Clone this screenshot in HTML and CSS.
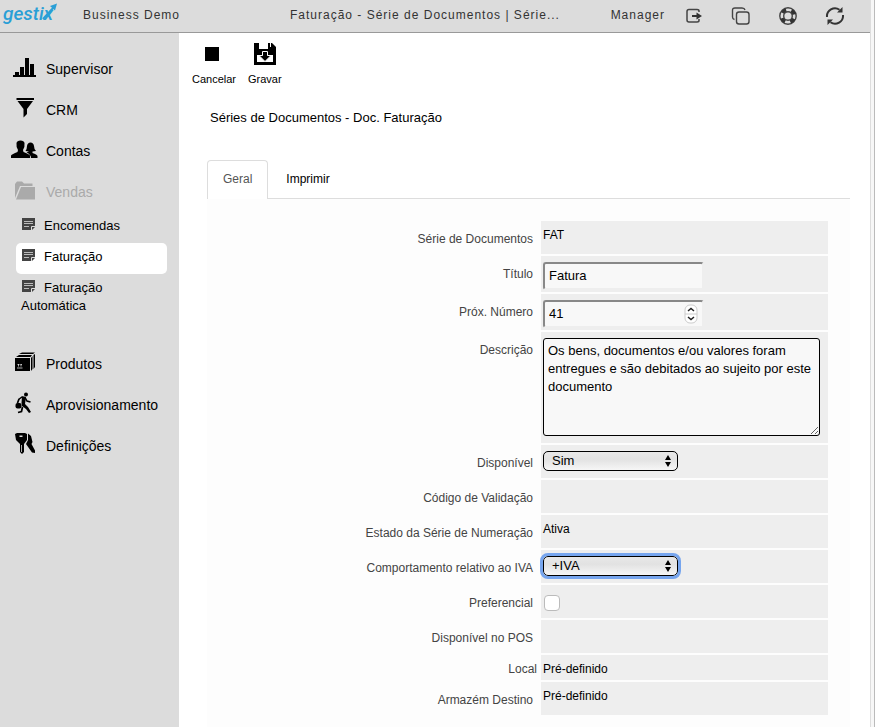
FILE: index.html
```html
<!DOCTYPE html>
<html lang="pt">
<head>
<meta charset="utf-8">
<title>Faturação - Série de Documentos</title>
<link rel="stylesheet" href="styles.css">
</head>
<body>
<div class="app">
  <header class="topbar">
    <a class="logo" href="#"><span class="logo-text">gestix</span>
      <svg class="logo-arrow" width="18" height="20" viewBox="0 0 18 20"><path d="M3 17L14 5" stroke="#2a9fd6" stroke-width="2" fill="none"/><path d="M10 4L17 1.500 15 8.500Z" fill="#2a9fd6"/></svg>
    </a>
    <span class="company">Business Demo</span>
    <span class="crumb">Faturação - Série de Documentos | Série...</span>
    <span class="user">Manager</span>
    <nav class="actions">
      <button type="button" aria-label="Sair"><svg width="20" height="20" viewBox="0 0 20 20"><path d="M15 6V5Q15 3.500 13 3.500H5Q3 3.500 3 5.500V14Q3 16 5 16H13Q15 16 15 14.500V13" fill="none" stroke="#444" stroke-width="1.500"/><path d="M8 9H12.500V6.500L18 10 12.500 13.500V11H8Z" fill="#333"/></svg></button>
      <button type="button" aria-label="Duplicar"><svg width="20" height="20" viewBox="0 0 20 20"><rect x="5.500" y="6" width="12.500" height="12" rx="2.500" fill="none" stroke="#444" stroke-width="1.400"/><path d="M3.500 13.500Q1.500 13 1.500 11V4.500Q1.500 2 4 2H11Q13.500 2 14 4" fill="none" stroke="#444" stroke-width="1.400"/></svg></button>
      <button type="button" aria-label="Ajuda"><svg width="20" height="20" viewBox="0 0 20 20"><circle cx="10" cy="10" r="8.200" fill="none" stroke="#444" stroke-width="1.400"/><circle cx="10" cy="10" r="6.200" fill="none" stroke="#333" stroke-width="4" stroke-dasharray="4.400 5.340" stroke-dashoffset="-2.700"/><circle cx="10" cy="10" r="4.300" fill="none" stroke="#444" stroke-width="1.400"/></svg></button>
      <button type="button" aria-label="Atualizar"><svg width="20" height="20" viewBox="0 0 20 20"><path d="M2 11A8 8 0 0 1 14.500 3.700M18 9A8 8 0 0 1 5.500 16.300" fill="none" stroke="#333" stroke-width="2"/><path d="M12 6.500L17.500 1V6.500ZM8 13.500L2.500 19V13.500Z" fill="#333"/></svg></button>
    </nav>
  </header>
  <div class="layout">
    <nav class="sidebar">
      <a class="item" href="#"><svg class="icon" width="28" height="24" viewBox="0 0 28 24"><path d="M3 20H26V22H3ZM5 17H9V21H5ZM10 12H14V21H10ZM15 3H19V21H15ZM20 9H24V21H20Z"/></svg>Supervisor</a>
      <a class="item" href="#"><svg class="icon" width="28" height="24" viewBox="0 0 28 24"><path d="M6.500 2H24V4H6.500ZM7.500 5H23L17 13V18L13.500 21.500V13Z"/></svg>CRM</a>
      <a class="item" href="#"><svg class="icon" width="28" height="24" viewBox="0 0 28 24"><path d="M1 21V18.500Q2 17 7.500 15L8 13Q6 10 6.500 6Q7 3.500 10.500 3.500T14.500 6Q15 10 13 13L13.500 15Q19 17 20 18.500V21Z"/><path d="M21 21Q21 17.500 16.500 15.500L19 14.500Q17 14 15.500 14Q17 12 17 9Q17.500 5.500 20.500 5.500T24 9Q24 12 26 14L22.500 14.500V16Q27 17.500 27.500 19V21Z"/></svg>Contas</a>
      <a class="item muted" href="#"><svg class="icon" width="28" height="24" viewBox="0 0 28 24"><path d="M5 20V6L7 3.500H12L14 5.500H22.500V8H10L5 20Z"/><path d="M11 9H25V21.500H6Z"/></svg>Vendas</a>
      <div class="submenu">
        <a class="sub" href="#"><svg width="13" height="12" viewBox="0 0 13 12"><path d="M0 0H13V9L10 12H0Z" fill="#444"/><path d="M2 3.500H11M2 5.500H11M2 8.500H7" stroke="#bbb"/><path d="M9.500 12V8.500H13" fill="none" stroke="#ddd"/></svg>Encomendas</a>
        <a class="sub active" href="#"><svg width="13" height="12" viewBox="0 0 13 12"><path d="M0 0H13V9L10 12H0Z" fill="#444"/><path d="M2 3.500H11M2 5.500H11M2 8.500H7" stroke="#bbb"/><path d="M9.500 12V8.500H13" fill="none" stroke="#ddd"/></svg>Faturação</a>
        <a class="sub" href="#"><svg width="13" height="12" viewBox="0 0 13 12"><path d="M0 0H13V9L10 12H0Z" fill="#444"/><path d="M2 3.500H11M2 5.500H11M2 8.500H7" stroke="#bbb"/><path d="M9.500 12V8.500H13" fill="none" stroke="#ddd"/></svg>Faturação Automática</a>
      </div>
      <a class="item" href="#"><svg class="icon" width="28" height="24" viewBox="0 0 28 24"><path d="M5 8H20V21H5ZM6 7L9 5H22L20.500 7ZM9 4L12 2.500H25L23 4ZM21 8L22.500 6V19L21 21ZM23.500 5L25 4V17L23.500 19Z"/><path d="M7 18H12.500M8.500 16.500V14M11 16.500V14M7.500 14.500H9.500M10.500 14.500H12" stroke="#ddd" fill="none" stroke-width=".8"/></svg>Produtos</a>
      <a class="item" href="#"><svg class="icon" width="28" height="24" viewBox="0 0 28 24"><circle cx="16" cy="3.500" r="2"/><path d="M8.500 8.500L12 6L15 6.500L17 10L20.500 11" fill="none" stroke="#000" stroke-width="1.500"/><path d="M12 5.500L16 6.500L15 13L18 16L21 21L19 22L16 18L12 15L11.500 12Z"/><path d="M9 8L7.500 12M12.500 16L11.500 20.500L8 21.500" fill="none" stroke="#000" stroke-width="1.700"/><rect x="5.500" y="12" width="6" height="5.500" rx="2"/></svg>Aprovisionamento</a>
      <a class="item" href="#"><svg class="icon" width="28" height="24" viewBox="0 0 28 24"><path fill-rule="evenodd" d="M5 2L7 1H15L17 2V8L14 12V20L12 22L10 20V12L6 8ZM9.500 3.500H12.500V5H9.500Z"/><path d="M18 1.500L21 4L22.500 10L21.500 12L25 18.500V21L22 20.500L16 12L18 8Z"/><path d="M11.500 13V20" stroke="#aaa" stroke-width="1"/></svg>Definições</a>
    </nav>
    <main class="content">
      <div class="toolbar">
        <button type="button" class="tool"><svg width="24" height="24" viewBox="0 0 24 24"><rect x="3" y="5" width="14" height="14"/></svg>Cancelar</button>
        <button type="button" class="tool"><svg width="24" height="24" viewBox="0 0 24 24"><path d="M1 1H6V7H15V1H17V5H18V1H19L23 5V23H1Z"/><path d="M4 13H20V20H4Z" fill="#fff"/><path d="M9.500 9.500H14.500V13.500H18L12 19.500L6 13.500H9.500Z" stroke="#fff"/></svg>Gravar</button>
      </div>
      <h1 class="title">Séries de Documentos - Doc. Faturação</h1>
      <div class="tabs">
        <button type="button" class="tab selected">Geral</button>
        <button type="button" class="tab">Imprimir</button>
      </div>
      <form class="panel">
        <div class="row"><span class="label">Série de Documentos</span><div class="value">FAT</div></div>
        <div class="row tall"><label class="label" for="titulo">Título</label><div class="value"><input class="box" id="titulo" type="text" value="Fatura"></div></div>
        <div class="row tall"><label class="label" for="numero">Próx. Número</label><div class="value"><span class="field"><input class="box" id="numero" type="number" value="41"><svg class="spinner" width="14" height="20" viewBox="0 0 14 20"><rect x="1" y="1" width="12" height="18" rx="5" fill="#fff" stroke="#ccc"/><path d="M1 10H13" stroke="#ccc"/><path d="M4 7L7 4.500 10 7M4 13L7 15.500 10 13" fill="none" stroke="#222" stroke-width="1.500"/></svg></span></div></div>
        <div class="row area"><label class="label" for="descricao">Descrição</label><div class="value"><textarea class="text" id="descricao">Os bens, documentos e/ou valores foram entregues e são debitados ao sujeito por este documento</textarea></div></div>
        <div class="row"><label class="label" for="disponivel">Disponível</label><div class="value"><span class="field"><select class="select" id="disponivel"><option>Sim</option><option>Não</option></select><svg class="arrows" width="8" height="12" viewBox="0 0 8 12"><path d="M4 0L7 5H1ZM4 12L7 7H1Z"/></svg></span></div></div>
        <div class="row"><span class="label">Código de Validação</span><div class="value"></div></div>
        <div class="row"><span class="label">Estado da Série de Numeração</span><div class="value">Ativa</div></div>
        <div class="row"><label class="label" for="iva">Comportamento relativo ao IVA</label><div class="value"><span class="field"><select class="select focused" id="iva"><option>+IVA</option></select><svg class="arrows" width="8" height="12" viewBox="0 0 8 12"><path d="M4 0L7 5H1ZM4 12L7 7H1Z"/></svg></span></div></div>
        <div class="row"><label class="label" for="pref">Preferencial</label><div class="value"><input class="check" id="pref" type="checkbox"></div></div>
        <div class="row"><span class="label">Disponível no POS</span><div class="value"></div></div>
        <div class="row short"><span class="label">Local</span><div class="value">Pré-definido</div></div>
        <div class="row"><span class="label">Armazém Destino</span><div class="value">Pré-definido</div></div>
      </form>
    </main>
  </div>
</div>
<div class="gutter"></div>
</body>
</html>
```
FILE: styles.css
```css
* { box-sizing: border-box; }
body {
  margin: 0;
  min-height: 100vh;
  display: flex;
  background: #fff;
  color: #000;
  font: 12px/18px "Liberation Sans", Arial, sans-serif;
}
button, input, select, textarea { font: inherit; color: inherit; }
button { background: none; border: 0; padding: 0; cursor: pointer; }
a { color: inherit; text-decoration: none; }
svg { flex: none; }
.app { flex: 1; min-width: 0; display: flex; flex-direction: column; }
.gutter { width: 5px; background: #f7f7f7; border-left: 1px solid #ddd; border-right: 1px solid #bbb; }

.topbar {
  display: flex;
  align-items: center;
  height: 33px;
  padding-right: 25px;
  background: #dcdcdc;
  border-bottom: 1px solid #999;
  color: #333;
  letter-spacing: 1px;
  white-space: nowrap;
}
.company, .crumb, .user { padding-bottom: 2px; }
.logo { position: relative; width: 83px; padding: 0 0 4px 3px; color: #2a9fd6; }
.logo-text { font: italic 500 19px/28px Roboto, sans-serif; letter-spacing: 0; }
.logo-arrow { position: absolute; left: 40px; top: 2px; }
.company { width: 207px; }
.crumb { flex: 1; }
.actions { display: flex; gap: 27px; margin-left: 19px; }
.actions button { width: 20px; height: 20px; }

.layout { flex: 1; display: flex; }
.sidebar { width: 179px; background: #dcdcdc; padding: 15px 12px 0 10px; }
.item { display: flex; align-items: center; gap: 8px; height: 41px; font-size: 14px; }
.icon { margin-bottom: 4px; fill: currentColor; }
.muted { color: #aaa; }
.submenu { padding: 0 0 20px 6px; }
.sub { display: block; padding: 5px 5px 8px; line-height: 18px; font-size: 13px; border-radius: 5px; }
.sub svg { margin: 0 9px 0 1px; }
.active { background: #fff; }

.content { flex: 1; min-width: 0; padding: 9px 20px 12px 13px; }
.toolbar { display: flex; gap: 12px; }
.tool { display: flex; flex-direction: column; align-items: center; gap: 4px; font-size: 11px; }
.title { margin: 21px 0 33px 18px; font-size: 13px; font-weight: 400; line-height: 18px; }
.tabs { display: flex; margin-left: 15px; border-bottom: 1px solid #ddd; }
.tab { height: 38px; padding: 0 18px; }
.selected {
  height: 39px;
  margin-bottom: -1px;
  padding: 0 15px 2px;
  color: #555;
  background: #fff;
  border: 1px solid #ddd;
  border-bottom: 0;
  border-radius: 4px 4px 0 0;
}
.panel { display: grid; gap: 2px; margin-left: 15px; padding: 22px 22px 12px 0; background: #fdfdfd; }
.row { display: grid; grid-template-columns: 1fr 287px; min-height: 33px; }
.tall { min-height: 36px; }
.area { min-height: 111px; }
.short { min-height: 25px; }
.label { padding: 9px 8px 0 0; text-align: right; color: #444; }
.short .label { padding: 5px 4px 0 0; }
.value { padding: 5px 2px 0; background: #eee; }
.tall .value, .area .value, .value:has(.select) { padding-top: 6px; }
.field { position: relative; display: block; width: fit-content; }
.box {
  display: block;
  width: 161px;
  height: 28px;
  padding: 0 4px 2px;
  font-size: 13px;
  background: #f8f8f8;
  border: 2px solid;
  border-color: #888 #eee #eee #888;
  border-radius: 3px;
  appearance: textfield;
}
.box::-webkit-inner-spin-button { appearance: none; margin: 0; }
.spinner { position: absolute; right: 6px; top: 4px; }
.text {
  display: block;
  width: 277px;
  height: 98px;
  padding: 3px 4px;
  font-size: 13px;
  line-height: 18px;
  background: #f8f8f8;
  border: 1px solid #000;
  border-radius: 3px;
}
.select {
  display: block;
  width: 135px;
  height: 20px;
  padding: 0 8px;
  font-size: 13px;
  line-height: 18px;
  appearance: none;
  background: linear-gradient(#e8e8e8, #e2e2e2 40%, #f6f6f6);
  border: 1px solid #000;
  border-radius: 5px;
}
.focused { outline: 3px solid #76a5ee; }
.arrows { position: absolute; right: 6px; top: 4px; }
.check {
  display: block;
  width: 16px;
  height: 16px;
  margin: 5px 1px;
  appearance: none;
  background: #fff;
  border: 1px solid #bbb;
  border-radius: 4px;
}
```
